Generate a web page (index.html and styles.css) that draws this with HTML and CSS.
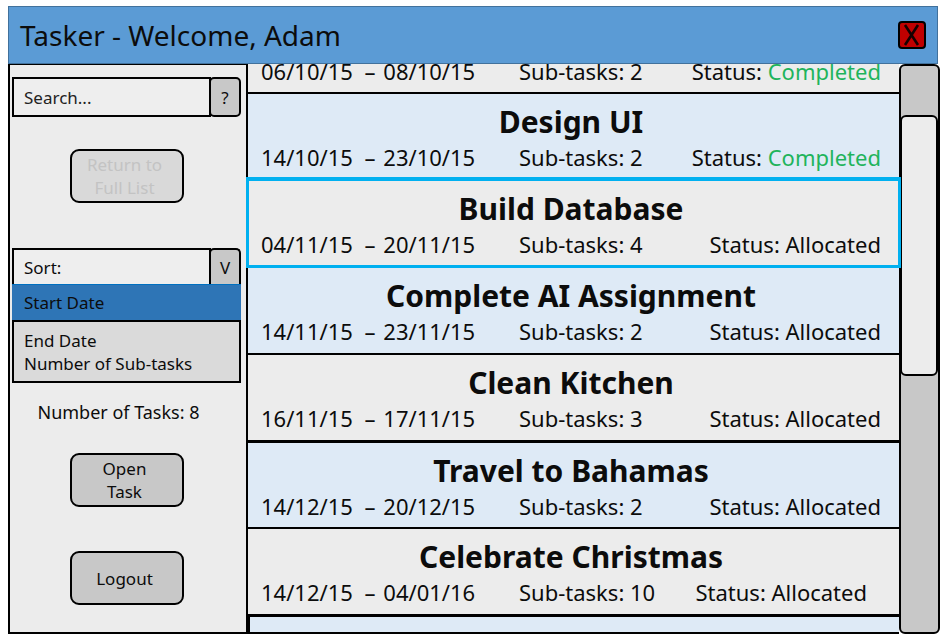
FILE: index.html
```html
<!DOCTYPE html>
<html lang="en">
<head>
<meta charset="utf-8">
<title>Tasker</title>
<link rel="stylesheet" href="styles.css">
</head>
<body>
<div class="window">
  <header class="titlebar">
    <h1 class="titlebar-text">Tasker - Welcome, Adam</h1>
    <button class="close" type="button" aria-label="Close">
      <svg viewBox="0 0 28 28" width="28" height="28" aria-hidden="true"><path d="M7 4 20 24M20 4 7 24" fill="none" stroke="#160000" stroke-width="2.6"/></svg>
    </button>
  </header>
  <div class="body">
    <aside class="sidebar">
      <form class="field search">
        <input class="field-input" type="text" placeholder="Search..." aria-label="Search">
        <button class="field-button" type="button">?</button>
      </form>
      <button class="action action-return" type="button" disabled>Return to Full List</button>
      <div class="sort">
        <div class="field">
          <select class="field-input" aria-label="Sort"><option>Sort:</option></select>
          <button class="field-button field-button-open" type="button">V</button>
        </div>
        <ul class="menu">
          <li class="menu-item menu-item-selected">Start Date</li>
          <li class="menu-item">End Date</li>
          <li class="menu-item">Number of Sub-tasks</li>
        </ul>
      </div>
      <p class="count">Number of Tasks: 8</p>
      <button class="action action-open" type="button">Open Task</button>
      <button class="action" type="button">Logout</button>
    </aside>
    <main class="list">
      <article class="task task-first">
        <p class="meta"><span>06/10/15 <span class="dash">–</span> 08/10/15</span><span>Sub-tasks: 2</span><span class="status">Status: <span class="done">Completed</span></span></p>
      </article>
      <article class="task task-alt">
        <h2 class="name">Design UI</h2>
        <p class="meta"><span>14/10/15 <span class="dash">–</span> 23/10/15</span><span>Sub-tasks: 2</span><span class="status">Status: <span class="done">Completed</span></span></p>
      </article>
      <article class="task task-selected">
        <h2 class="name">Build Database</h2>
        <p class="meta"><span>04/11/15 <span class="dash">–</span> 20/11/15</span><span>Sub-tasks: 4</span><span class="status">Status: Allocated</span></p>
      </article>
      <article class="task task-alt">
        <h2 class="name">Complete AI Assignment</h2>
        <p class="meta"><span>14/11/15 <span class="dash">–</span> 23/11/15</span><span>Sub-tasks: 2</span><span class="status">Status: Allocated</span></p>
      </article>
      <article class="task">
        <h2 class="name">Clean Kitchen</h2>
        <p class="meta"><span>16/11/15 <span class="dash">–</span> 17/11/15</span><span>Sub-tasks: 3</span><span class="status">Status: Allocated</span></p>
      </article>
      <article class="task task-alt task-month">
        <h2 class="name">Travel to Bahamas</h2>
        <p class="meta"><span>14/12/15 <span class="dash">–</span> 20/12/15</span><span>Sub-tasks: 2</span><span class="status">Status: Allocated</span></p>
      </article>
      <article class="task">
        <h2 class="name">Celebrate Christmas</h2>
        <p class="meta meta-wide"><span>14/12/15 <span class="dash">–</span> 04/01/16</span><span>Sub-tasks: 10</span><span class="status">Status: Allocated</span></p>
      </article>
      <article class="task task-alt task-month task-last"></article>
    </main>
    <div class="scrollbar"><div class="thumb"></div></div>
  </div>
</div>
</body>
</html>
```
FILE: styles.css
```css
* { box-sizing: border-box; }

body {
  margin: 0;
  background: #fff;
  color: #0c0c0c;
  font-family: "Noto Sans", "Liberation Sans", sans-serif;
  font-size: 17px;
}

h1, h2, p, ul { margin: 0; padding: 0; }
ul { list-style: none; }
button, input, select { font: inherit; color: inherit; }

.window {
  display: flex;
  flex-direction: column;
  height: 100vh;
  padding: 6px 0 0 8px;
}

.titlebar {
  display: flex;
  flex: none;
  align-items: center;
  justify-content: space-between;
  height: 58px;
  margin-right: 2px;
  padding: 0 11px;
  background: #5b9bd5;
  border: 1px solid #41719c;
}

.titlebar-text {
  font-size: 28px;
  font-weight: 400;
}

.close {
  width: 28px;
  height: 28px;
  padding: 0;
  background: #c00000;
  border: 2px solid #000;
  border-radius: 4px;
}

.close svg { display: block; margin: -2px; }

.body {
  display: flex;
  flex: 1;
  min-height: 0;
}

.sidebar {
  display: flex;
  flex-direction: column;
  align-items: center;
  width: 240px;
  flex: none;
  padding: 12px 5px 0 2px;
  background: #ececec;
  border: 2px solid #000;
  border-width: 1px 2px 2px;
}

.field { display: flex; width: 100%; height: 40px; }

.field-input {
  flex: 1;
  min-width: 0;
  padding: 0 10px;
  background: #eee;
  border: 2px solid #000;
  border-radius: 0;
  appearance: none;
}

.field-input::placeholder { color: #222; opacity: 1; }

.field-button {
  width: 32px;
  margin-left: -2px;
  padding: 0;
  background: #c8c8c8;
  border: 2px solid #000;
  border-radius: 5px;
}

.field-button-open { border-radius: 5px 5px 0 0; }

.action {
  width: 114px;
  height: 54px;
  flex: none;
  padding: 0 14px 0 10px;
  background: #c8c8c8;
  border: 2px solid #000;
  border-radius: 9px;
  line-height: 23px;
}

.action-return {
  margin: 32px 0 45px;
  background: #d9d9d9;
  color: #c3c3c3;
}

.action-open {
  margin-bottom: 44px;
  padding: 0 30px 0 26px;
}

.sort { width: 100%; }
.sort .field { height: 36px; }
.sort .field-input, .sort .field-button { border-bottom: 0; }

.menu {
  padding-bottom: 6px;
  background: #dadada;
  border: 2px solid #000;
  border-top: 0;
}

.menu-item { padding: 0 10px; line-height: 23px; }

.menu-item-selected {
  margin: 0 -2px 7px;
  padding: 0 12px;
  background: #2e75b6;
  border-top: 1px solid #0070c0;
  border-bottom: 2px solid #000;
  line-height: 35px;
}

.count {
  margin: 16px 16px 28px 0;
  font-size: 18px;
  line-height: 26px;
}

.list {
  flex: 1;
  min-width: 0;
  overflow-x: visible;
  overflow-y: clip;
  border-bottom: 2px solid #000;
}

.task {
  height: 87px;
  padding: 12px 18px 0 13px;
  background: #ececec;
  border-top: 2px solid #000;
}

.task-first {
  display: flow-root;
  height: 28px;
  padding-top: 0;
  border-top: 0;
}

.task-first .meta { margin-top: -7px; }
.task-alt { background: #deeaf6; }

.task-selected {
  position: relative;
  border-top-color: #00b0f0;
  outline: 3px solid #00b0f0;
  outline-offset: -1px;
}

.task-month { border-top-width: 3px; }
.task-last { border-left: 2px solid #000; }

.name {
  font-size: 30px;
  font-weight: 700;
  line-height: 32px;
  text-align: center;
}

.meta {
  display: grid;
  grid-template-columns: 258px 1fr auto;
  margin-top: 5px;
  font-size: 22px;
  line-height: 28px;
  white-space: nowrap;
}

.meta-wide { padding-right: 14px; }
.dash { margin: 0 2px 0 6px; }
.status { text-align: right; }
.done { color: #1fb45c; }

.scrollbar {
  width: 41px;
  flex: none;
  padding-top: 49px;
  background: #c8c8c8;
  border: 2px solid #000;
  border-radius: 6px;
}

.thumb {
  height: 261px;
  margin-left: -1px;
  background: #ececec;
  border: 2px solid #000;
  border-radius: 6px;
}
```
